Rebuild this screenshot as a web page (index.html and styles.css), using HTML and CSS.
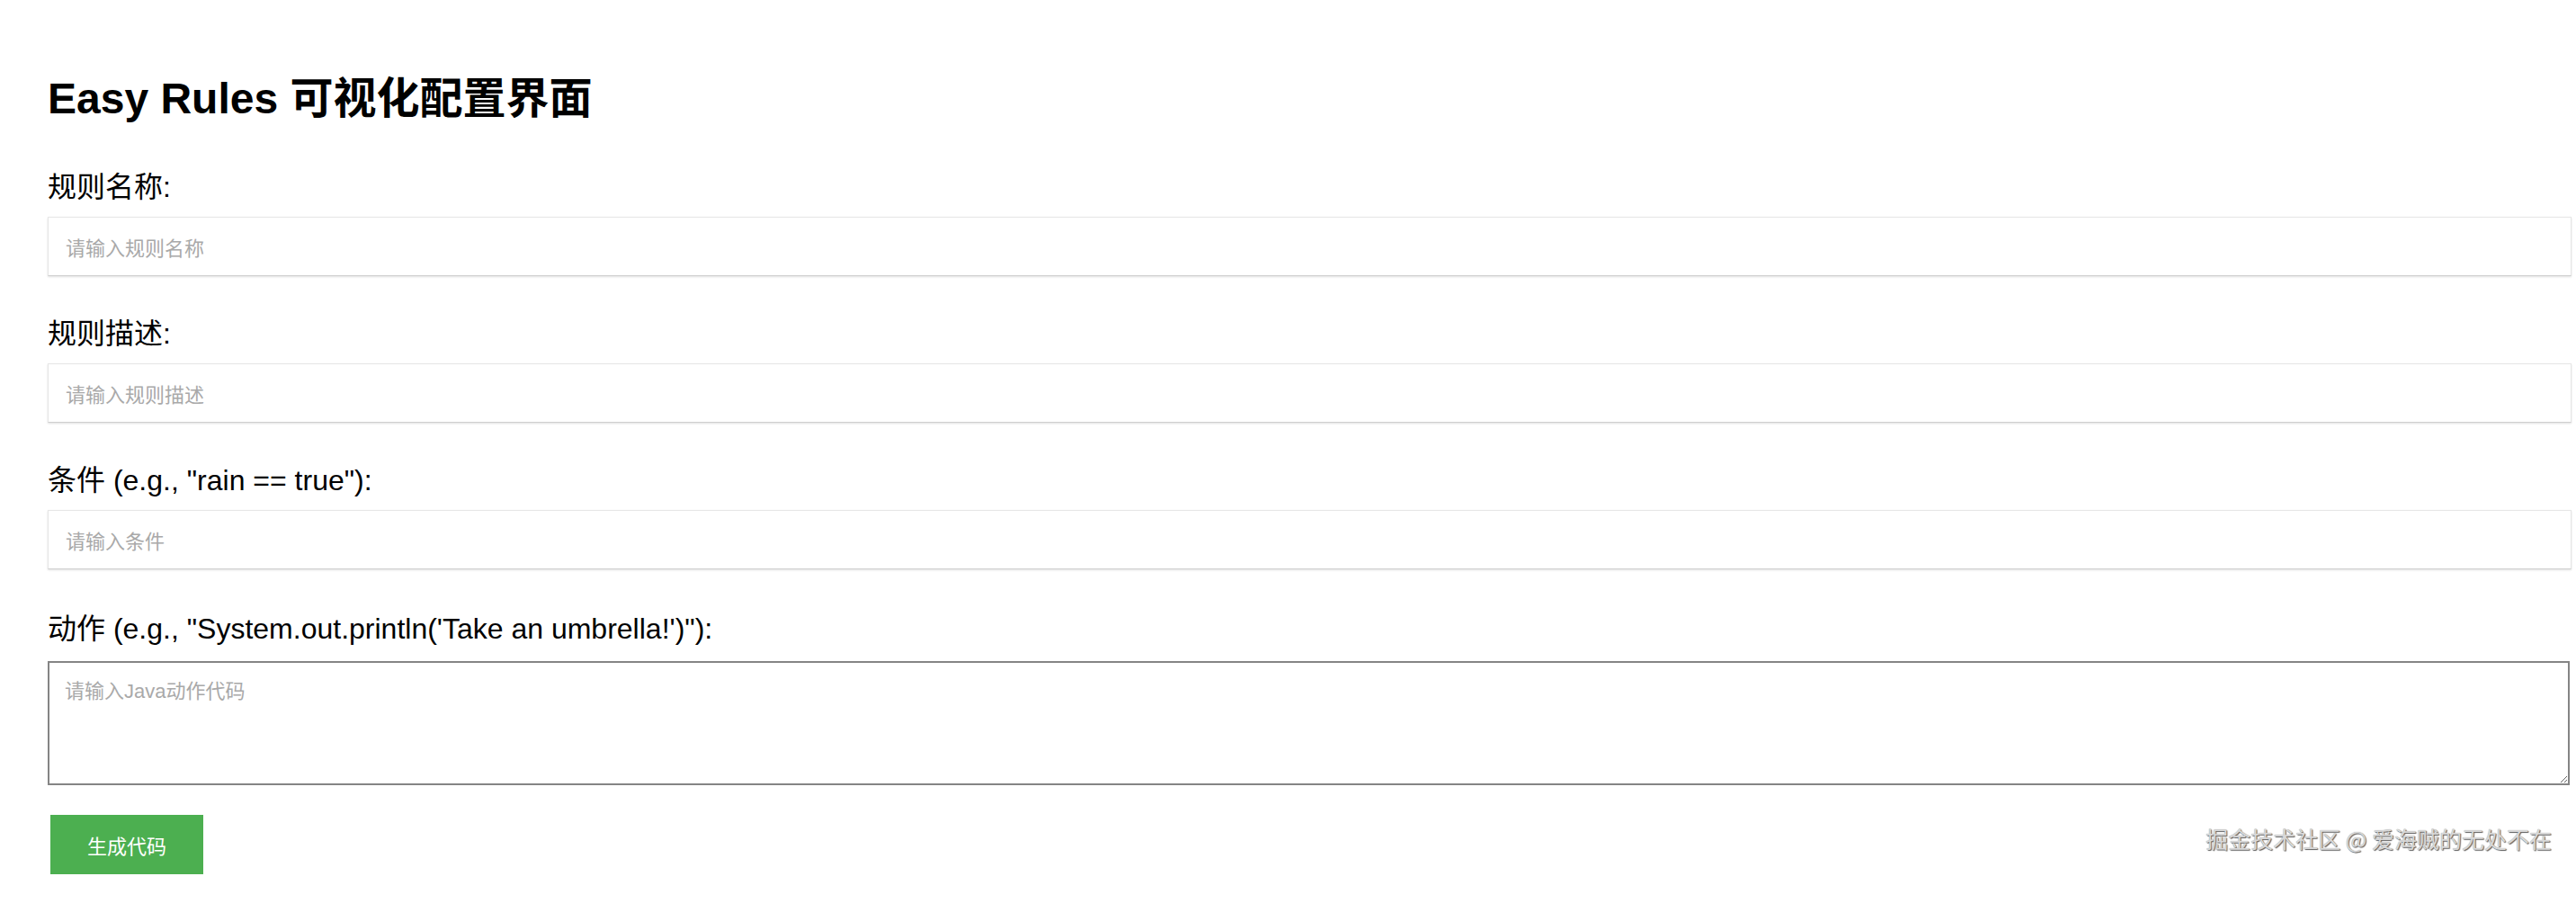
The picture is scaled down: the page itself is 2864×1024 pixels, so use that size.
FILE: index.html
```html
<!DOCTYPE html>
<html lang="zh-CN">
<head>
<meta charset="utf-8">
<title>Easy Rules 可视化配置界面</title>
<link rel="stylesheet" href="styles.css">
</head>
<body>
<main class="page">
  <h1 class="title">Easy Rules 可视化配置界面</h1>
  <form class="rule-form">
    <div class="field">
      <label class="field-label" for="ruleName">规则名称:</label>
      <input class="field-input" id="ruleName" type="text" placeholder="请输入规则名称">
    </div>
    <div class="field">
      <label class="field-label" for="ruleDesc">规则描述:</label>
      <input class="field-input" id="ruleDesc" type="text" placeholder="请输入规则描述">
    </div>
    <div class="field">
      <label class="field-label" for="ruleCond">条件 (e.g., "rain == true"):</label>
      <input class="field-input" id="ruleCond" type="text" placeholder="请输入条件">
    </div>
    <div class="field field-last">
      <label class="field-label" for="ruleAction">动作 (e.g., "System.out.println('Take an umbrella!')"):</label>
      <textarea class="field-textarea" id="ruleAction" placeholder="请输入Java动作代码"></textarea>
    </div>
    <button class="btn-generate" type="button">生成代码</button>
  </form>
  <div class="watermark">掘金技术社区 @ 爱海贼的无处不在</div>
</main>
</body>
</html>
```

FILE: styles.css
```css
html, body {
  margin: 0;
  padding: 0;
  background: #ffffff;
}

body {
  font-family: "Liberation Sans", "Noto Sans CJK SC", sans-serif;
  color: #000;
}

.page {
  position: relative;
  min-height: 1024px;
  box-sizing: border-box;
  padding: 86px 5px 0 53px;
}

.title {
  margin: 0;
  font-size: 48px;
  line-height: 48px;
  height: 48px;
  font-weight: bold;
  font-family: "Liberation Sans", "Noto Sans CJK SC", sans-serif;
}

.rule-form {
  display: flex;
  flex-direction: column;
  align-items: stretch;
  margin-top: 53px;
}

.field {
  display: flex;
  flex-direction: column;
  margin-bottom: 43px;
}

.field-last {
  margin-bottom: 33px;
}

.field-label {
  display: block;
  box-sizing: border-box;
  height: 36px;
  padding-top: 3px;
  font-size: 32px;
  line-height: 36px;
  margin-bottom: 18px;
  white-space: nowrap;
}

.field-last .field-label {
  padding-top: 5px;
}

.field-input {
  box-sizing: border-box;
  width: 100%;
  height: 66px;
  margin: 0;
  padding: 6px 19px 0 19px;
  font-size: 22px;
  font-family: "Liberation Sans", "Noto Sans CJK SC", sans-serif;
  border: 1px solid #e6e6e6;
  border-bottom-color: #cfcfcf;
  border-radius: 0;
  box-shadow: 0 1px 2px rgba(0, 0, 0, 0.12);
  outline: none;
  background: #fff;
}

.field-input::placeholder,
.field-textarea::placeholder {
  color: #a9a9a9;
}

.field-textarea {
  box-sizing: border-box;
  width: calc(100% - 2px);
  height: 138px;
  margin: 5px 0 0 0;
  padding: 13px 17px;
  font-size: 22px;
  font-family: "Liberation Sans", "Noto Sans CJK SC", sans-serif;
  border: 2px solid #858585;
  border-radius: 0;
  resize: both;
  background: #fff;
}

.btn-generate {
  align-self: flex-start;
  width: 170px;
  height: 66px;
  margin-left: 3px;
  padding: 0;
  border: none;
  border-radius: 0;
  background: #4caf50;
  color: #fff;
  font-size: 22px;
  font-family: "Noto Sans CJK SC", sans-serif;
  cursor: pointer;
}

.watermark {
  position: absolute;
  right: 27px;
  top: 917px;
  font-size: 25px;
  line-height: 30px;
  font-family: "Noto Sans CJK SC", sans-serif;
  color: #d8d8d8;
  text-shadow: 1px 1px 1px #5e5e5e, 0 0 1px #999;
  white-space: nowrap;
}
```
